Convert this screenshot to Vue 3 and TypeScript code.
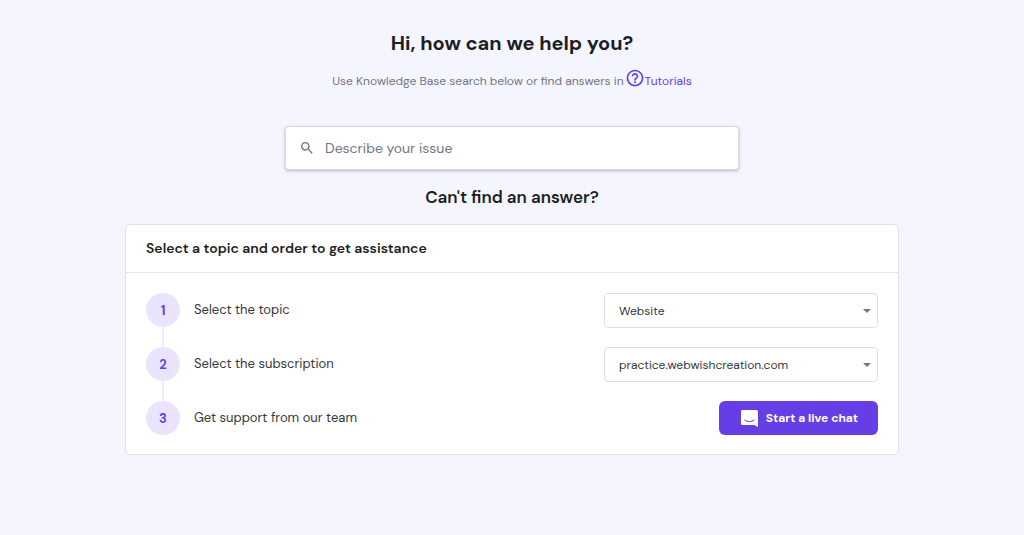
<script setup lang="ts">
import { ref } from 'vue'

const query = ref('')
const topic = ref('Website')
const subscription = ref('practice.webwishcreation.com')

const topics: string[] = ['Website']
const subscriptions: string[] = ['practice.webwishcreation.com']
</script>

<template>
  <main class="help">
    <h1 class="title">Hi, how can we help you?</h1>
    <p class="intro">
      <span>Use Knowledge Base search below or find answers in</span>
      <a class="tutorials" href="#tutorials">
        <svg class="tutorials-icon" viewBox="0 0 24 24" aria-hidden="true">
          <path
            d="M11 18h2v-2h-2v2zm1-16C6.480 2 2 6.480 2 12s4.480 10 10 10 10-4.480 10-10S17.520 2 12 2zm0 18c-4.410 0-8-3.590-8-8s3.590-8 8-8 8 3.590 8 8-3.590 8-8 8zm0-14c-2.210 0-4 1.790-4 4h2c0-1.100.9-2 2-2s2 .9 2 2c0 2-3 1.750-3 5h2c0-2.250 3-2.500 3-5 0-2.210-1.790-4-4-4z"
          />
        </svg>
        <span>Tutorials</span>
      </a>
    </p>

    <form class="search" role="search" @submit.prevent>
      <label class="search-label" for="issue" aria-label="Describe your issue">
        <svg class="search-icon" viewBox="0 0 24 24" aria-hidden="true">
          <path
            d="M15.500 14h-.79l-.28-.27A6.470 6.470 0 0 0 16 9.500 6.500 6.500 0 1 0 9.500 16c1.610 0 3.090-.59 4.230-1.570l.27.28v.79l5 4.990L20.490 19l-4.990-5zm-6 0C7.010 14 5 11.990 5 9.500S7.010 5 9.500 5 14 7.010 14 9.500 11.990 14 9.500 14z"
          />
        </svg>
      </label>
      <input id="issue" v-model="query" class="search-input" type="text" placeholder="Describe your issue" />
    </form>

    <h2 class="subtitle">Can't find an answer?</h2>

    <section class="card">
      <h3 class="card-title">Select a topic and order to get assistance</h3>
      <ol class="steps">
        <li class="step">
          <span class="badge">1</span>
          <label class="step-label" for="topic">Select the topic</label>
          <span class="select-box">
            <select id="topic" v-model="topic" class="select">
              <option v-for="item in topics" :key="item">{{ item }}</option>
            </select>
            <svg class="caret" viewBox="0 0 8 4" aria-hidden="true"><path d="M0 0h8L4 4z" /></svg>
          </span>
        </li>
        <li class="step">
          <span class="badge">2</span>
          <label class="step-label" for="subscription">Select the subscription</label>
          <span class="select-box">
            <select id="subscription" v-model="subscription" class="select">
              <option v-for="item in subscriptions" :key="item">{{ item }}</option>
            </select>
            <svg class="caret" viewBox="0 0 8 4" aria-hidden="true"><path d="M0 0h8L4 4z" /></svg>
          </span>
        </li>
        <li class="step">
          <span class="badge">3</span>
          <span class="step-label">Get support from our team</span>
          <button class="chat" type="button">
            <svg class="chat-icon" viewBox="0 0 17 17" aria-hidden="true">
              <path class="chat-bubble" d="M1.500 0h14q1.500 0 1.500 1.500V17l-4-2H1.500Q0 15 0 13.500v-12Q0 0 1.500 0z" />
              <path class="chat-smile" d="M3.500 10q5 3.200 10 0" />
            </svg>
            <span>Start a live chat</span>
          </button>
        </li>
      </ol>
    </section>
  </main>
</template>

<style>
body {
  margin: 0;
  background: #f4f5ff;
}
</style>

<style scoped>
.help {
  display: flex;
  flex-direction: column;
  align-items: center;
  padding: 28px 24px;
  box-sizing: border-box;
  color: #1d1e20;
  font-family: "DM Sans", Inter, sans-serif;
}

.title {
  margin: 0;
  font-size: 20px;
  line-height: 30px;
  font-weight: 700;
}

.intro {
  display: flex;
  align-items: center;
  gap: 1px;
  margin: 10px 0 0;
  color: #727586;
  font-size: 12px;
  line-height: 20px;
}

.tutorials {
  display: flex;
  align-items: center;
  color: #673de6;
  text-decoration: none;
}

.tutorials-icon {
  width: 20px;
  height: 20px;
  margin-bottom: 6px;
  fill: currentColor;
}

.search {
  display: flex;
  align-items: center;
  width: 100%;
  max-width: 454px;
  height: 44px;
  margin-top: 32px;
  padding: 0 13px;
  box-sizing: border-box;
  border: 1px solid #dadce0;
  border-radius: 4px;
  background: #fff;
  box-shadow: 0 1px 3px rgba(29, 30, 32, 0.3);
}

.search-label {
  display: flex;
}

.search-icon {
  width: 16px;
  height: 16px;
  fill: #727586;
}

.search-input {
  flex: 1;
  min-width: 0;
  margin-left: 10px;
  padding: 0;
  border: 0;
  outline: 0;
  background: transparent;
  color: inherit;
  font: 400 14px/20px "DM Sans", Inter, sans-serif;
}

.search-input::placeholder {
  color: #727586;
  opacity: 1;
}

.subtitle {
  margin: 15px 0 0;
  font-size: 17px;
  line-height: 24px;
  font-weight: 600;
}

.card {
  width: 100%;
  max-width: 774px;
  margin-top: 15px;
  box-sizing: border-box;
  border: 1px solid #dfe0ea;
  border-radius: 6px;
  background: #fff;
}

.card-title {
  margin: 0;
  padding: 11px 20px 12px;
  border-bottom: 1px solid #e3e4ec;
  font-size: 14px;
  line-height: 24px;
  font-weight: 600;
}

.steps {
  display: flex;
  flex-direction: column;
  gap: 19px;
  margin: 0;
  padding: 20px 20px 19px;
  list-style: none;
}

.step {
  display: flex;
  align-items: flex-start;
}

.badge {
  position: relative;
  display: grid;
  place-items: center;
  width: 34px;
  height: 34px;
  border-radius: 50%;
  background: #ebe4ff;
  color: #673de6;
  font-size: 13px;
  font-weight: 700;
}

.step:not(:last-child) .badge::after {
  content: "";
  position: absolute;
  top: 100%;
  left: 16px;
  width: 2px;
  height: 20px;
  background: #f1edff;
}

.step-label {
  margin-left: 14px;
  color: #36373b;
  font-size: 13px;
  line-height: 34px;
}

.select-box {
  position: relative;
  width: 274px;
  margin-left: auto;
}

.select {
  display: block;
  width: 100%;
  height: 35px;
  padding: 0 28px 0 14px;
  appearance: none;
  border: 1px solid #dfe0e6;
  border-radius: 4px;
  background: #fff;
  color: #36373b;
  font: 400 12px/20px "DM Sans", Inter, sans-serif;
}

.caret {
  position: absolute;
  top: 16px;
  right: 7px;
  width: 8px;
  height: 4px;
  fill: #727586;
  pointer-events: none;
}

.chat {
  display: flex;
  align-items: center;
  gap: 8px;
  height: 34px;
  margin-left: auto;
  padding: 0 20px 0 22px;
  border: 0;
  border-radius: 6px;
  background: #673de6;
  color: #fff;
  font: 700 12px/20px "DM Sans", Inter, sans-serif;
}

.chat-icon {
  width: 17px;
  height: 17px;
}

.chat-bubble {
  fill: #fff;
}

.chat-smile {
  fill: none;
  stroke: #673de6;
}
</style>
